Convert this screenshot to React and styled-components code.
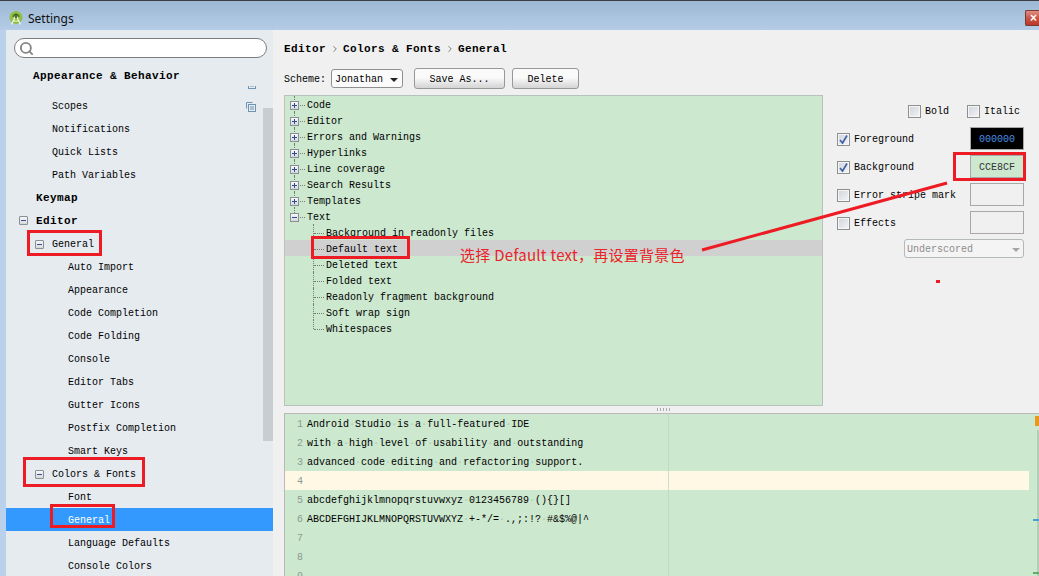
import React from "react";
import styled, { createGlobalStyle } from "styled-components";
import { Search, ChevronRight } from "lucide-react";

const MONO = `"Liberation Mono", "DejaVu Sans Mono", monospace`;

const GlobalStyle = createGlobalStyle`
  html, body {
    margin: 0;
    padding: 0;
    background: #f0f0f0;
  }
  body {
    width: 1039px;
    height: 576px;
    overflow: hidden;
    font-family: ${MONO};
    font-size: 10px;
    color: #000;
  }
`;

const Window = styled.div`
  position: relative;
  width: 1039px;
  height: 576px;
  display: flex;
  flex-direction: column;
  overflow: hidden;
  background: #b9d1ea;
`;

const TitleBar = styled.div`
  height: 24px;
  flex: none;
  display: flex;
  align-items: center;
  gap: 5px;
  padding: 5px 0 0 9px;
  border-top: 1px solid #3c3f42;
  background: linear-gradient(#9db8d5, #b4cce6);
`;

const TitleText = styled.span`
  font-family: "Noto Sans", "Open Sans", sans-serif;
  font-size: 12px;
  color: #111;
`;

const CloseButton = styled.div`
  margin-left: auto;
  width: 14px;
  height: 16px;
  border: 1px solid #7a3b36;
  border-right: 0;
  border-radius: 2px 0 0 2px;
  background: linear-gradient(#dc8f84, #c9503e 55%, #b93a2a);
  color: #fff;
  font: bold 12px/15px "Liberation Sans", sans-serif;
  padding-left: 4px;
  box-sizing: border-box;
`;

const Body = styled.div`
  flex: 1;
  display: flex;
  min-height: 0;
  padding-left: 6px;
`;

const Sidebar = styled.aside`
  position: relative;
  width: 267px;
  flex: none;
  background: #e6ebf0;
  display: flex;
  flex-direction: column;
  overflow: hidden;
`;

const SearchBox = styled.div`
  height: 20px;
  margin: 8px 6px 0 8px;
  flex: none;
  box-sizing: border-box;
  border: 1px solid #7c7c7c;
  border-radius: 10px;
  background: #fff;
  display: flex;
  align-items: center;
  padding-left: 4px;
  color: #858585;
`;

const StickyHead = styled.div`
  height: 20px;
  margin-top: 8px;
  flex: none;
  display: flex;
  align-items: center;
  padding-left: 27px;
  font-size: 11px;
  font-weight: bold;
  letter-spacing: 0.4px;
`;

const NavList = styled.div`
  flex: 1;
  min-height: 0;
  overflow: hidden;
`;

const NavInner = styled.div`
  margin-top: -15px;
`;

const NavRow = styled.div`
  height: 23px;
  box-sizing: border-box;
  padding-top: ${(p) => (p.$bold ? 0 : 2)}px;
  display: flex;
  align-items: center;
  padding-left: ${(p) => p.$indent}px;
  padding-right: 17px;
  background: ${(p) => (p.$selected ? "#3399ff" : "transparent")};
  color: ${(p) => (p.$selected ? "#fff" : "#000")};
  font-weight: ${(p) => (p.$bold ? "bold" : "normal")};
  font-size: ${(p) => (p.$bold ? "11px" : "10px")};
  letter-spacing: ${(p) => (p.$bold ? "0.4px" : "0")};
`;

const NavExpander = styled.span`
  width: 9px;
  height: 9px;
  margin-right: 8px;
  flex: none;
  box-sizing: border-box;
  border: 1px solid #8b8f94;
  border-radius: 1px;
  background: linear-gradient(#f6f7f8, #d6d9dc);
  display: flex;
  align-items: center;
  justify-content: center;
  &::after {
    content: "";
    width: 5px;
    height: 1px;
    background: #3d4f8f;
  }
`;

const CopyIcon = styled.svg`
  margin-left: auto;
  flex: none;
`;

const SideScrollThumb = styled.div`
  position: absolute;
  top: 78px;
  right: 0;
  width: 10px;
  height: 333px;
  background: #c8cdd2;
`;

const Main = styled.main`
  flex: 1;
  min-width: 0;
  background: #f0f0f0;
  display: flex;
  flex-direction: column;
`;

const Breadcrumb = styled.div`
  height: 16px;
  margin: 11px 0 0 11px;
  flex: none;
  display: flex;
  align-items: center;
  gap: 3.5px;
  font-size: 11px;
  font-weight: bold;
  letter-spacing: 0.4px;
`;

const Crumb = styled.span`
  color: #666;
  display: flex;
`;

const SchemeRow = styled.div`
  height: 21px;
  margin: 11px 0 0 11px;
  flex: none;
  display: flex;
  align-items: center;
`;

const SchemeLabel = styled.span`
  padding-top: 2px;
`;

const SchemeSelect = styled.div`
  width: 72px;
  height: 19px;
  margin-left: 5px;
  box-sizing: border-box;
  display: flex;
  align-items: center;
  justify-content: space-between;
  padding: 2px 4px 0 3px;
  background: #fbfbfb;
  border: 1px solid #8f8f8f;
  border-radius: 3px;
`;

const Caret = styled.span`
  width: 0;
  height: 0;
  border-left: 4px solid transparent;
  border-right: 4px solid transparent;
  border-top: 4px solid ${(p) => p.$color || "#222"};
  margin-top: 1px;
`;

const Button = styled.div`
  width: ${(p) => p.$width}px;
  height: 21px;
  margin-left: ${(p) => p.$gap}px;
  padding-top: 2px;
  box-sizing: border-box;
  display: flex;
  align-items: center;
  justify-content: center;
  background: linear-gradient(#fafafa 45%, #d4d4d4);
  border: 1px solid #989898;
  border-radius: 3px;
`;

const EditorRow = styled.div`
  height: 311px;
  margin: 6px 0 0 11px;
  flex: none;
  display: flex;
`;

const TreePanel = styled.div`
  width: 539px;
  flex: none;
  box-sizing: border-box;
  border: 1px solid #b8c2ba;
  background: #cce8cf;
`;

const TreeRow = styled.div`
  position: relative;
  height: 16px;
  box-sizing: border-box;
  padding-top: 2px;
  display: flex;
  align-items: center;
  padding-left: ${(p) => (p.$child ? 28 : 5)}px;
  background: ${(p) => (p.$selected ? "#d0d0d0" : "transparent")};
  &::before {
    content: "";
    position: absolute;
    left: ${(p) => (p.$child ? 28 : 9)}px;
    top: 0;
    height: ${(p) => (p.$last ? "9px" : "16px")};
    border-left: 1px dotted #6f7f72;
  }
`;

const TreeExpander = styled.span`
  position: relative;
  width: 9px;
  height: 9px;
  box-sizing: border-box;
  flex: none;
  border: 1px solid #8b8f94;
  background: linear-gradient(#f6f7f8, #d6d9dc);
  &::before {
    content: "";
    position: absolute;
    left: 1px;
    top: 3px;
    width: 5px;
    height: 1px;
    background: #2f4a96;
  }
  &::after {
    content: "";
    display: ${(p) => (p.$open ? "none" : "block")};
    position: absolute;
    left: 3px;
    top: 1px;
    width: 1px;
    height: 5px;
    background: #2f4a96;
  }
`;

const TreeDash = styled.span`
  width: ${(p) => (p.$child ? 10 : 5)}px;
  margin: 0 2px 0 1px;
  flex: none;
  border-top: 1px dotted #6f7f72;
`;

const Options = styled.div`
  width: 187px;
  margin-left: 14px;
  padding-top: 7px;
  flex: none;
  display: flex;
  flex-direction: column;
`;

const StyleToggles = styled.div`
  height: 16px;
  margin-bottom: 9px;
  padding-left: 71px;
  display: flex;
  gap: 18px;
`;

const CheckLabel = styled.label`
  display: flex;
  align-items: center;
  gap: 4px;
  padding-top: 2px;
`;

const CheckBox = styled.span`
  width: 13px;
  height: 13px;
  box-sizing: border-box;
  flex: none;
  border: 1px solid #8e8f8f;
  box-shadow: inset 0 0 0 1px #f6f6f6;
  background: linear-gradient(135deg, #cfd4da, #f4f5f6);
  display: flex;
  align-items: center;
  justify-content: center;
`;

const OptionRow = styled.div`
  height: 23px;
  margin-bottom: 5px;
  display: flex;
  align-items: center;
  justify-content: space-between;
`;

const Swatch = styled.div`
  width: 54px;
  height: 23px;
  padding-top: 2px;
  box-sizing: border-box;
  display: flex;
  align-items: center;
  justify-content: center;
  border: 1px solid #a8a8a8;
  background: ${(p) => p.$bg || "#f0f0f0"};
  color: ${(p) => p.$fg || "#333"};
`;

const EffectSelect = styled.div`
  width: 120px;
  height: 19px;
  margin-left: 67px;
  box-sizing: border-box;
  display: flex;
  align-items: center;
  justify-content: space-between;
  padding: 2px 3px 0 2px;
  color: #8c8c8c;
  background: #f4f4f4;
  border: 1px solid #b3b8b8;
  border-radius: 3px;
`;

const Splitter = styled.div`
  height: 7px;
  flex: none;
  display: flex;
  align-items: center;
  padding-left: 384px;
`;

const SplitterDots = styled.span`
  width: 14px;
  height: 3px;
  background: repeating-linear-gradient(90deg, #aaa 0 1px, transparent 1px 3px);
`;

const Preview = styled.div`
  position: relative;
  flex: 1;
  min-height: 0;
  margin-left: 11px;
  overflow: hidden;
  border-top: 1px solid #b9b9b9;
  border-left: 1px solid #b9b9b9;
  background: #cce8cf;
`;

const CodeLine = styled.div`
  width: 744px;
  height: 19px;
  padding-top: 2px;
  box-sizing: border-box;
  display: flex;
  align-items: center;
  background: ${(p) => (p.$caret ? "#fef8e4" : "transparent")};
`;

const LineNo = styled.span`
  width: 18px;
  margin-right: 4px;
  flex: none;
  text-align: right;
  color: #8d9a90;
`;

const Code = styled.span`
  white-space: pre;
`;

const SpaceMark = styled.span`
  color: #a9c7ad;
`;

const MarginLine = styled.div`
  position: absolute;
  top: 0;
  bottom: 0;
  left: 383px;
  width: 1px;
  background: #bcd8bf;
  opacity: 0.8;
`;

const ScrollTrack = styled.div`
  position: absolute;
  top: 16px;
  bottom: 0;
  right: 0;
  width: 2px;
  background: #b3cdb7;
`;

const Marker = styled.div`
  position: absolute;
  right: 0;
  top: ${(p) => p.$top}px;
  width: ${(p) => p.$width}px;
  height: ${(p) => p.$height}px;
  background: ${(p) => p.$color};
`;

const RedBox = styled.div`
  position: absolute;
  left: ${(p) => p.$x}px;
  top: ${(p) => p.$y}px;
  width: ${(p) => p.$w}px;
  height: ${(p) => p.$h}px;
  box-sizing: border-box;
  border: 3px solid #ed1c24;
  pointer-events: none;
`;

const Note = styled.div`
  position: absolute;
  left: 460px;
  top: 245px;
  line-height: 20px;
  white-space: nowrap;
  font-family: "Noto Sans CJK SC", "Liberation Sans", sans-serif;
  font-size: 15px;
  letter-spacing: 0.28px;
  color: #e8232a;
`;

const ArrowLine = styled.svg`
  position: absolute;
  left: 0;
  top: 0;
  pointer-events: none;
`;

const RedDot = styled.div`
  position: absolute;
  left: 936px;
  top: 280px;
  width: 4px;
  height: 3px;
  background: #ed1c24;
`;

const navRows = [
  { label: "File Status", indent: 46, copy: true },
  { label: "Scopes", indent: 46, copy: true },
  { label: "Notifications", indent: 46 },
  { label: "Quick Lists", indent: 46 },
  { label: "Path Variables", indent: 46 },
  { label: "Keymap", indent: 30, bold: true },
  { label: "Editor", indent: 13, bold: true, open: true },
  { label: "General", indent: 29, open: true },
  { label: "Auto Import", indent: 62 },
  { label: "Appearance", indent: 62 },
  { label: "Code Completion", indent: 62 },
  { label: "Code Folding", indent: 62 },
  { label: "Console", indent: 62 },
  { label: "Editor Tabs", indent: 62 },
  { label: "Gutter Icons", indent: 62 },
  { label: "Postfix Completion", indent: 62 },
  { label: "Smart Keys", indent: 62 },
  { label: "Colors & Fonts", indent: 29, open: true },
  { label: "Font", indent: 62 },
  { label: "General", indent: 62, selected: true },
  { label: "Language Defaults", indent: 62 },
  { label: "Console Colors", indent: 62 },
];

const treeRoots = ["Code", "Editor", "Errors and Warnings", "Hyperlinks", "Line coverage", "Search Results", "Templates"];

const treeChildren = [
  "Background in readonly files",
  "Default text",
  "Deleted text",
  "Folded text",
  "Readonly fragment background",
  "Soft wrap sign",
  "Whitespaces",
];

const codeLines = [
  "Android Studio is a full-featured IDE",
  "with a high level of usability and outstanding",
  "advanced code editing and refactoring support.",
  "",
  "abcdefghijklmnopqrstuvwxyz 0123456789 (){}[]",
  "ABCDEFGHIJKLMNOPQRSTUVWXYZ +-*/= .,;:!? #&$%@|^",
  "",
  "",
  "",
];

const AndroidLogo = () => (
  <svg width="14" height="14" viewBox="0 0 14 14">
    <circle cx="7" cy="6.5" r="6.5" fill="#8fc043" />
    <path d="M3.5 6a3.5 3.5 0 0 1 7 0z" fill="#4f7a26" />
    <path d="M7 4 2.5 13.5M7 4l4.5 9.5M4 10h6" stroke="#f4f8ee" strokeWidth="1.2" fill="none" />
    <rect x="6.2" y="3" width="1.6" height="4" fill="#33521a" />
  </svg>
);

const Copy = () => (
  <CopyIcon width="10" height="10" viewBox="0 0 10 10" fill="none" stroke="#6f93b0">
    <path d="M.5 6.5v-6h6" />
    <rect x="2.5" y="2.5" width="7" height="7" fill="#e6ebf0" />
    <path d="M4 5h4M4 7h4" />
  </CopyIcon>
);

const Check = ({ checked, children }) => (
  <CheckLabel>
    <CheckBox>
      {checked && (
        <svg width="11" height="11" viewBox="0 0 11 11" fill="none">
          <path d="M2 6l2.5 3L9 1.5" stroke="#3f5da8" strokeWidth="1.6" />
        </svg>
      )}
    </CheckBox>
    {children}
  </CheckLabel>
);

const withSpaceMarks = (text) =>
  text.split(" ").map((word, i) => (
    <React.Fragment key={i}>
      {i > 0 && <SpaceMark>·</SpaceMark>}
      {word}
    </React.Fragment>
  ));

const App = () => {
  return (
    <Window>
      <GlobalStyle />
      <TitleBar>
        <AndroidLogo />
        <TitleText>Settings</TitleText>
        <CloseButton>×</CloseButton>
      </TitleBar>
      <Body>
        <Sidebar>
          <SearchBox>
            <Search size={15} strokeWidth={3} />
          </SearchBox>
          <StickyHead>Appearance &amp; Behavior</StickyHead>
          <NavList>
            <NavInner>
              {navRows.map((row, i) => (
                <NavRow key={i} $indent={row.indent} $bold={row.bold} $selected={row.selected}>
                  {row.open && <NavExpander />}
                  {row.label}
                  {row.copy && <Copy />}
                </NavRow>
              ))}
            </NavInner>
          </NavList>
          <SideScrollThumb />
        </Sidebar>
        <Main>
          <Breadcrumb>
            Editor
            <Crumb>
              <ChevronRight size={10} />
            </Crumb>
            Colors &amp; Fonts
            <Crumb>
              <ChevronRight size={10} />
            </Crumb>
            General
          </Breadcrumb>
          <SchemeRow>
            <SchemeLabel>Scheme:</SchemeLabel>
            <SchemeSelect>
              Jonathan
              <Caret />
            </SchemeSelect>
            <Button $width={91} $gap={11}>Save As...</Button>
            <Button $width={67} $gap={7}>Delete</Button>
          </SchemeRow>
          <EditorRow>
            <TreePanel>
              {treeRoots.map((label) => (
                <TreeRow key={label}>
                  <TreeExpander />
                  <TreeDash />
                  {label}
                </TreeRow>
              ))}
              <TreeRow $last>
                <TreeExpander $open />
                <TreeDash />
                Text
              </TreeRow>
              {treeChildren.map((label, i) => (
                <TreeRow
                  key={label}
                  $child
                  $selected={label === "Default text"}
                  $last={i === treeChildren.length - 1}
                >
                  <TreeDash $child />
                  {label}
                </TreeRow>
              ))}
            </TreePanel>
            <Options>
              <StyleToggles>
                <Check>Bold</Check>
                <Check>Italic</Check>
              </StyleToggles>
              <OptionRow>
                <Check checked>Foreground</Check>
                <Swatch $bg="#000" $fg="#4a90e8">000000</Swatch>
              </OptionRow>
              <OptionRow>
                <Check checked>Background</Check>
                <Swatch $bg="#cce8cf">CCE8CF</Swatch>
              </OptionRow>
              <OptionRow>
                <Check>Error stripe mark</Check>
                <Swatch />
              </OptionRow>
              <OptionRow>
                <Check>Effects</Check>
                <Swatch />
              </OptionRow>
              <EffectSelect>
                Underscored
                <Caret $color="#a5a5a5" />
              </EffectSelect>
            </Options>
          </EditorRow>
          <Splitter>
            <SplitterDots />
          </Splitter>
          <Preview>
            {codeLines.map((line, i) => (
              <CodeLine key={i} $caret={i === 3}>
                <LineNo>{i + 1}</LineNo>
                <Code>{withSpaceMarks(line)}</Code>
              </CodeLine>
            ))}
            <MarginLine />
            <ScrollTrack />
            <Marker $top={2} $width={4} $height={10} $color="#e8981a" />
            <Marker $top={105} $width={6} $height={2} $color="#4a9bd8" />
            <Marker $top={158} $width={6} $height={2} $color="#68a868" />
          </Preview>
        </Main>
      </Body>
      <RedBox $x={27} $y={230} $w={75} $h={26} />
      <RedBox $x={23} $y={457} $w={122} $h={30} />
      <RedBox $x={50} $y={504} $w={65} $h={24} />
      <RedBox $x={311} $y={236} $w={99} $h={23} />
      <RedBox $x={953} $y={152} $w={73} $h={29} />
      <Note>选择 Default text，再设置背景色</Note>
      <ArrowLine width="1039" height="576">
        <line x1="702" y1="250" x2="947" y2="183" stroke="#ed1c24" strokeWidth="3" />
      </ArrowLine>
      <RedDot />
    </Window>
  );
};

export default App;
